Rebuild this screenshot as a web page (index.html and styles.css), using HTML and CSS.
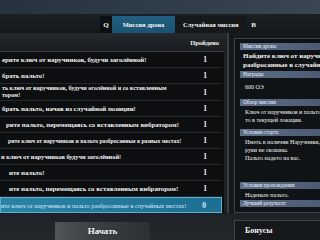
FILE: index.html
```html
<!DOCTYPE html>
<html lang="ru">
<head>
<meta charset="utf-8">
<link rel="stylesheet" href="styles.css">
</head>
<body>
<div class="screen">
  <div class="topstrip"></div>
  <div class="tabbar">
    <div class="tab key">Q</div>
    <div class="tab active">Миссия дрона</div>
    <div class="tab">Случайная миссия</div>
    <div class="tab key plain">B</div>
  </div>
  <div class="main">
    <div class="list">
      <div class="list-head"><span class="head-label">Пройдено</span></div>
      <div class="rows">
        <div class="row"><span class="name">ерите ключ от наручников, будучи заголённой!</span><span class="count">1</span></div>
        <div class="row"><span class="name">брать пальто!</span><span class="count">1</span></div>
        <div class="row tall"><span class="name small two">ть ключ от наручников, будучи оголённой и со вставленным<br>тором!</span><span class="count">1</span></div>
        <div class="row"><span class="name">брать пальто, начав из случайной позиции!</span><span class="count">1</span></div>
        <div class="row"><span class="name in1">рите пальто, перемещаясь со вставленным вибратором!</span><span class="count">1</span></div>
        <div class="row"><span class="name small in2">рите ключ от наручников и пальто разбросанные в разных местах!</span><span class="count">1</span></div>
        <div class="row"><span class="name mid">и ключ от наручников будучи заголённой!</span><span class="count">1</span></div>
        <div class="row"><span class="name in3">ите пальто!</span><span class="count">1</span></div>
        <div class="row"><span class="name in3">ите пальто, перемещаясь со вставленным вибратором!</span><span class="count">1</span></div>
        <div class="row selected"><span class="name">ите ключ от наручников и пальто разбросанные в случайных местах!</span><span class="count">0</span></div>
      </div>
      <div class="scrollbar"></div>
    </div>
    <div class="details">
      <div class="bar">Миссия дрона</div>
      <div class="title">Найдите ключ от наручников и пальто<br>разбросанные в случайных местах!</div>
      <div class="bar">Награды</div>
      <div class="text reward">600 ОЭ</div>
      <div class="bar">Обзор миссии</div>
      <div class="text">Ключ от наручников и пальто разбросаны<br>то в текущей локации.</div>
      <div class="bar">Условия старта</div>
      <div class="text">Иметь в наличии Наручники,<br>руки не скованы.<br>Пальто надето на вас.</div>
      <div class="bar gapbar">Условия прохождения</div>
      <div class="text last">Наденьте пальто.</div>
      <div class="bar">Лучший результат</div>
    </div>
  </div>
  <div class="bottom">
    <div class="start">Начать</div>
    <div class="bonus">Бонусы</div>
  </div>
</div>
</body>
</html>
```
FILE: styles.css
```css
html, body {
  margin: 0;
  padding: 0;
  background: #16191c;
}
.screen {
  width: 320px;
  height: 240px;
  overflow: hidden;
  display: flex;
  flex-direction: column;
  font-family: "Liberation Serif", "DejaVu Serif", serif;
  color: #f2f2f2;
  background: #16191c;
}
.topstrip {
  height: 14px;
  background: linear-gradient(90deg, #26333d 0%, #2f3d49 50%, #3a4650 100%);
  flex: none;
}
.tabbar {
  height: 19px;
  flex: none;
  display: flex;
  align-items: stretch;
  padding-left: 100px;
  background: linear-gradient(180deg, #1c2024, #15181b);
}
.tab {
  display: flex;
  align-items: center;
  justify-content: center;
  font-size: 6.5px;
  font-weight: bold;
  padding: 0 8px;
  background: #16191c;
  margin-top: 2px;
}
.tab.key {
  width: 12px;
  padding: 0;
  background: #0d1012;
  font-size: 7px;
}
.tab.plain {
  background: transparent;
  width: 14px;
}
.tab.active {
  width: 63px;
  padding: 0;
  background: linear-gradient(180deg, #215f80, #1b5372);
}
.main {
  flex: none;
  height: 180px;
  display: flex;
}
.list {
  width: 227px;
  flex: none;
  position: relative;
  border-right: 2px solid #3a3f44;
  background: #0c0e10;
  display: flex;
  flex-direction: column;
}
.list-head {
  height: 18px;
  flex: none;
  display: flex;
  align-items: center;
  justify-content: flex-end;
  background: linear-gradient(180deg, #25292d, #1a1d20);
  border-bottom: 1px solid #3a3f45;
  padding-right: 8px;
}
.head-label {
  font-size: 6.5px;
  font-weight: bold;
}
.rows {
  width: 222px;
  display: flex;
  flex-direction: column;
}
.row {
  height: 16px;
  display: flex;
  align-items: center;
  border-bottom: 1px solid #24282c;
  box-sizing: border-box;
}
.row.tall {
  height: 17px;
}
.name {
  flex: 1;
  font-size: 6.8px;
  font-weight: bold;
  padding-left: 2px;
  white-space: nowrap;
  overflow: hidden;
}
.name.small {
  font-size: 5.7px;
}
.name.mid {
  font-size: 6.3px;
  padding-left: 1px;
}
.name.two {
  line-height: 7px;
  font-size: 6px;
}
.name.in1 { padding-left: 6px; }
.name.in2 { padding-left: 8px; }
.name.in3 { padding-left: 9px; }
.count {
  width: 34px;
  flex: none;
  text-align: center;
  font-size: 7.5px;
  font-weight: bold;
}
.row.selected {
  background: linear-gradient(90deg, #2a84a8, #1d6e93);
  border: 1px solid #5fb0cf;
  color: #d6ecf6;
}
.row.selected .name {
  font-weight: normal;
  font-size: 6.3px;
  padding-left: 0;
}
.scrollbar {
  position: absolute;
  right: 0;
  top: 18px;
  width: 3px;
  height: 161px;
  background: #1d2125;
}
.details {
  flex: none;
  width: 86px;
  margin: 5px 0 0 5px;
  height: 175px;
  background: #0f1316;
  border: 1px solid #3b434b;
  border-right: none;
  padding: 4px 0 0 5px;
  box-sizing: border-box;
  display: flex;
  flex-direction: column;
  overflow: hidden;
}
.bar {
  height: 7px;
  flex: none;
  line-height: 7px;
  font-size: 5.5px;
  padding-left: 3px;
  color: #eef2f8;
  background: linear-gradient(90deg, #5e6f8a, #4d5b72);
  white-space: nowrap;
}
.title {
  font-size: 7px;
  font-weight: bold;
  line-height: 8.5px;
  padding: 2px 0 2px 3px;
  white-space: nowrap;
}
.text {
  font-size: 6px;
  line-height: 8px;
  padding: 2px 0 5px 5px;
  white-space: nowrap;
}
.text.reward {
  padding: 5px 0 8px 5px;
}
.text.last {
  padding-bottom: 1px;
}
.gapbar {
  margin-top: 15px;
}
.bottom {
  flex: 1;
  display: flex;
  align-items: flex-end;
  background: linear-gradient(180deg, #1e2226, #25292d);
}
.start {
  margin-left: 55px;
  width: 95px;
  height: 18px;
  display: flex;
  align-items: center;
  justify-content: center;
  font-size: 9px;
  font-weight: bold;
  background: linear-gradient(90deg, #50555a, #3b4045 40%, #2c3034);
}
.bonus {
  margin-left: 84px;
  flex: 1;
  height: 20px;
  box-sizing: border-box;
  border-top: 1px solid #3b434b;
  border-left: 1px solid #3b434b;
  background: #15191c;
  font-size: 8px;
  font-weight: bold;
  padding: 5px 0 0 10px;
}
```
